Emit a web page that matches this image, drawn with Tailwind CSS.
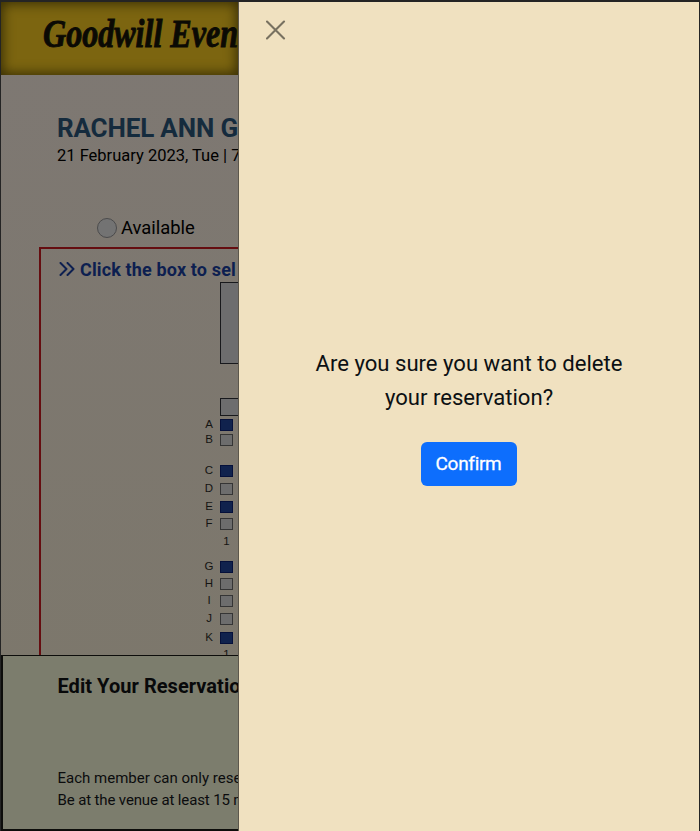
<!DOCTYPE html>
<html lang="en">
<head>
<meta charset="utf-8">
<title>Goodwill Events</title>
<script src="https://cdn.jsdelivr.net/npm/@tailwindcss/browser@4"></script>
</head>
<body class="w-[700px] h-[831px] overflow-hidden bg-[#202023] font-['Roboto','Liberation_Sans',sans-serif] text-black">
<div class="flex h-[831px] w-[700px] border-t-2 border-l border-r border-[#242424]">
  <main class="flex flex-col w-[237px] h-[829px] shrink-0 overflow-hidden whitespace-nowrap bg-linear-to-b from-[#7e7873] to-[#7c776a]">
    <header class="h-[73px] shrink-0 bg-[#7c6510] shadow-[inset_0_0_12px_2px_#3a3005] pl-[42px]">
      <svg class="block overflow-visible" width="196" height="70" role="img" aria-label="Goodwill Events">
        <text x="0" y="45" font-family="Liberation Serif, serif" font-style="italic" font-weight="700" font-size="39" textLength="195" lengthAdjust="spacingAndGlyphs" fill="#0b0a04" stroke="#0b0a04" stroke-width=".9">Goodwill Even</text>
      </svg>
    </header>
    <section class="h-[172px] shrink-0 pl-14 pt-[37px]">
      <h1 class="text-[26px] leading-[32px] font-bold text-[#152b3d] tracking-[-0.15px]">RACHEL ANN G</h1>
      <p class="text-[16.5px] leading-[22px] mt-px">21 February 2023, Tue | 7</p>
      <div class="flex items-center gap-1 mt-[50px] pl-10 h-[22px]">
        <span class="size-5 rounded-full border border-[#4b4b4c] bg-[#737373]"></span>
        <span class="text-[18.4px] leading-[22px]">Available</span>
      </div>
    </section>
    <section class="ml-[38px] h-[408px] w-[300px] shrink-0 overflow-hidden border-t-2 border-l-2 border-[#650d10]">
      <h2 class="flex items-center pl-[18px] mt-2 mb-px h-[24px] text-[18px] tracking-[0.14px] font-bold text-[#0d1f50]">
        <svg class="w-[16px] h-[14px] mr-[5px] shrink-0" viewBox="0 0 16 14" fill="none" stroke="currentColor" stroke-width="2" stroke-linecap="round" stroke-linejoin="round"><path d="M1.5 1 7.5 7l-6 6M8.5 1l6 6-6 6"/></svg>
        <span>Click the box to sel</span>
      </h2>
      <div class="ml-[179px] w-[100px] h-[82px] border border-[#18191c] bg-[#6d6d6e]"></div>
      <div class="ml-[179px] mt-[34px] w-[100px] h-[18px] border border-[#18191c] bg-[#6d6d6e]"></div>
      <div id="seats" class="ml-[162px] w-[31px] font-['Liberation_Sans',sans-serif] text-[11.5px] leading-none text-[#151513]"></div>
    </section>
    <section class="shrink-0 h-[176px] border border-l-2 border-b-2 border-[#0d0d0b] bg-[#7c7d6d] pl-[54.5px] pt-[18px] w-[300px]">
      <h2 class="text-[20px] tracking-[0.05px] leading-[24px] font-bold text-[#08090a]">Edit Your Reservatio</h2>
      <div class="mt-[69px] text-[15px] leading-[22px] text-[#0b0c0d]">
        <p>Each member can only rese</p>
        <p class="tracking-[-0.13px]">Be at the venue at least 15 m</p>
      </div>
    </section>
  </main>
  <aside class="flex grow flex-col items-center h-[829px] bg-[#f0e1c0] border-l border-[#5c574c]" role="dialog">
    <button class="self-start ml-[27px] mt-[18px] size-5 text-[#787160]" aria-label="Close">
      <svg class="size-5" viewBox="0 0 20 20" fill="none" stroke="currentColor" stroke-width="2.1" stroke-linecap="round"><path d="m1 1.5 17 17m0-17-17 17"/></svg>
    </button>
    <p class="mt-[307px] w-[340px] text-center text-[22.1px] leading-[33.5px] text-[#0c1013]">Are you sure you want to delete<br>your reservation?</p>
    <button class="mt-[28px] mr-px w-[96px] h-[44px] rounded-[6px] bg-[#0d6efd] text-white text-[19px] tracking-[-0.3px] [-webkit-text-stroke:0.3px_white]">Confirm</button>
  </aside>
</div>
<script>
  // label, row height, state: b = booked, f = free, n = seat number, g = gap
  const rows = [['A',17,'b'],['B',14,'f'],['',15,'g'],['C',17,'b'],['D',19,'f'],['E',17,'b'],['F',17,'f'],['1',19,'n'],['',7,'g'],['G',17,'b'],['H',17,'f'],['I',18,'f'],['J',18,'f'],['K',20,'b'],['1',13,'n']];
  const seat = { b: 'bg-[#10224d] border-[#05103a]', f: 'bg-[#6d6d6d] border-[#353535]' };
  document.getElementById('seats').innerHTML = rows.map(([label, h, s]) => {
    if (s === 'g') return `<div style="height:${h}px"></div>`;
    if (s === 'n') return `<div class="flex items-center justify-center pl-[16px]" style="height:${h}px">${label}</div>`;
    return `<div class="flex items-center" style="height:${h}px"><span class="w-[17px] pr-[5px] text-center">${label}</span><span class="w-[13px] h-[12px] border ${seat[s]}"></span></div>`;
  }).join('');
</script>
</body>
</html>
